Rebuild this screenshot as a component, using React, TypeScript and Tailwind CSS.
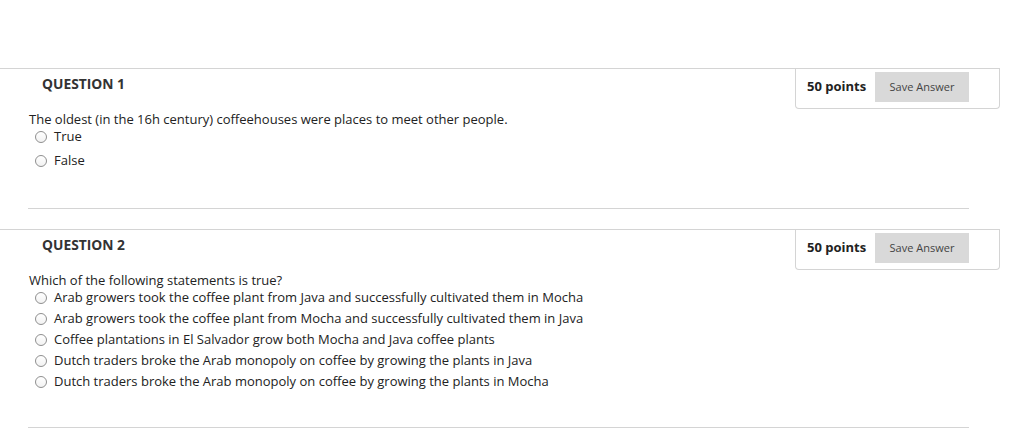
import React from "react";

type Question = {
  title: string;
  text: string;
  options: string[];
  gap: string;
};

const questions: Question[] = [
  {
    title: "QUESTION 1",
    text: "The oldest (in the 16h century) coffeehouses were places to meet other people.",
    options: ["True", "False"],
    gap: "gap-2",
  },
  {
    title: "QUESTION 2",
    text: "Which of the following statements is true?",
    options: [
      "Arab growers took the coffee plant from Java and successfully cultivated them in Mocha",
      "Arab growers took the coffee plant from Mocha and successfully cultivated them in Java",
      "Coffee plantations in El Salvador grow both Mocha and Java coffee plants",
      "Dutch traders broke the Arab monopoly on coffee by growing the plants in Java",
      "Dutch traders broke the Arab monopoly on coffee by growing the plants in Mocha",
    ],
    gap: "gap-[5px]",
  },
];

function Radio() {
  return (
    <span className="ml-[6px] mr-[7px] mt-[2px] inline-block h-[12px] w-[12px] shrink-0 rounded-full border border-[#8f8f8f] bg-gradient-to-b from-white to-[#f2f2f2]" />
  );
}

function QuestionBlock(props: { q: Question; first: boolean }) {
  const { q } = props;
  return (
    <div className={props.first ? "" : "mt-[20px]"}>
      <div className="flex w-[1000px] border-t border-[#d4d4d4]">
        <div className="flex-1 pl-[42px] pt-[6px] text-[13.8px] font-bold leading-[18px] text-[#333]">
          {q.title}
        </div>
        <div className="flex h-[40px] w-[205px] items-start rounded-b-[4px] border-x border-b border-[#d4d4d4] pl-[11px] pr-[30px]">
          <span className="mt-[8px] text-[13px] font-bold leading-[18px] text-[#222]">50 points</span>
          <button className="ml-auto mt-[3px] h-[30px] w-[94px] bg-[#d9d9d9] text-[11px] text-[#444]">
            Save Answer
          </button>
        </div>
      </div>
      <div className="pl-[29px] pt-[2px] text-[13px] leading-[16px] text-[#222]">
        <p>{q.text}</p>
        <div className={"mt-[1px] flex flex-col " + q.gap}>
          {q.options.map((opt, i) => (
            <label key={i} className="flex items-center">
              <Radio />
              <span>{opt}</span>
            </label>
          ))}
        </div>
      </div>
      <div className={"ml-[28px] w-[941px] border-t border-[#d4d4d4] " + (props.first ? "mt-[40px]" : "mt-[38px]")} />
    </div>
  );
}

export default function App() {
  return (
    <div className="h-[429px] w-[1012px] overflow-hidden bg-white pt-[68px] font-['Open_Sans',sans-serif]">
      {questions.map((q, i) => (
        <QuestionBlock key={i} q={q} first={i === 0} />
      ))}
    </div>
  );
}
